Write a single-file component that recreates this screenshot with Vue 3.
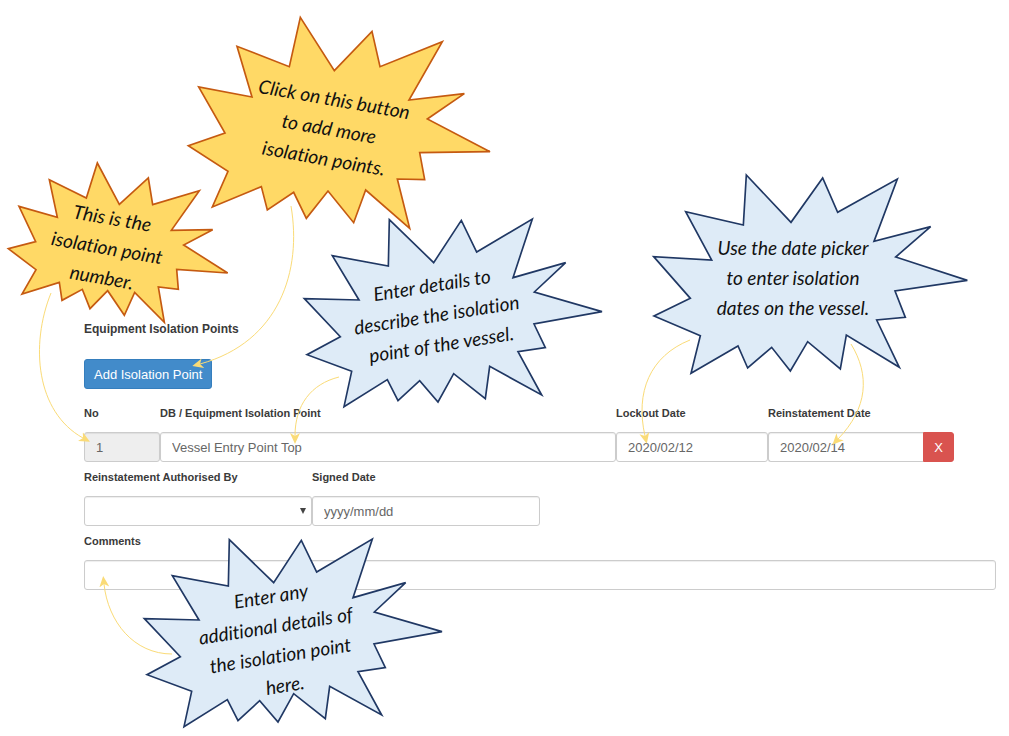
<script setup>
import { ref } from 'vue'

const number = ref('1')
const point = ref('Vessel Entry Point Top')
const lockout = ref('2020/02/12')
const reinstatement = ref('2020/02/14')
const authorisedBy = ref('')
const signed = ref('')
const comments = ref('')

const wideBurst = '283,29 416,158 499,31 545,126 712,27 654,203 812,158 718,246 921,305 717,342 751,413 669,425 740,555 584,469 571,566 476,491 429,576 374,512 309,572 277,509 147,590 170,484 36,434 136,380 28,266 192,270 112,137 280,168'

const bursts = [
  {
    id: 'add', tone: 'gold', x: 180, y: 10,
    points: '361,22 463,182 576,64 600,170 787,95 687,270 853,251 742,327 930,425 719,428 734,509 652,507 689,655 557,540 521,638 444,543 379,625 341,547 262,600 244,530 97,591 144,484 25,407 135,369 56,231 216,261 171,109 328,170',
    cx: 333, cy: 106, angle: 10,
    lines: ['Click on this button', 'to add more', 'isolation points.']
  },
  {
    id: 'number', tone: 'gold', x: 0, y: 155,
    points: '292,24 358,148 445,69 458,149 598,107 514,226 638,224 551,270 683,354 530,343 535,403 475,396 493,502 404,412 373,481 323,407 270,461 247,403 186,436 178,382 66,417 108,344 25,281 107,260 57,154 172,187 148,74 259,129',
    cx: 111, cy: 225, angle: 10,
    lines: ['This is the', 'isolation point', 'number.']
  },
  {
    id: 'details', tone: 'blue', x: 295, y: 210, points: wideBurst,
    cx: 433, cy: 292, angle: -9,
    lines: ['Enter details to', 'describe the isolation', 'point of the vessel.']
  },
  {
    id: 'dates', tone: 'blue', x: 645, y: 165,
    points: '304,30 438,172 533,39 578,142 757,42 687,229 857,185 752,276 967,346 750,378 781,457 695,465 763,607 604,510 586,612 488,530 436,618 380,547 308,609 279,543 138,625 166,512 27,453 136,400 26,275 200,285 122,140 295,180',
    cx: 793, cy: 255, angle: 0,
    lines: ['Use the date picker', 'to enter isolation', 'dates on the vessel.']
  },
  {
    id: 'comments', tone: 'blue', x: 135, y: 530, points: wideBurst,
    cx: 272, cy: 603, angle: -9,
    lines: ['Enter any', 'additional details of', 'the isolation point', 'here.']
  }
]

const arrows = [
  'M291 206 C302 270 280 342 200 364',
  'M51 293 C30 345 36 412 83 438',
  'M339 377 C311 384 295 405 295 436',
  'M690 340 C650 356 635 392 645 436',
  'M851 344 C870 375 868 408 838 439',
  'M172 654 C134 654 108 622 104 584'
]
</script>

<template>
  <main class="page">
    <form class="form" @submit.prevent>
      <h1 class="title">Equipment Isolation Points</h1>
      <button type="button" class="add">Add Isolation Point</button>

      <div class="row">
        <div class="field span-1">
          <label for="no">No</label>
          <input id="no" v-model="number" class="control muted" readonly />
        </div>
        <div class="field span-6">
          <label for="point">DB / Equipment Isolation Point</label>
          <input id="point" v-model="point" class="control" />
        </div>
        <div class="field span-2">
          <label for="lockout">Lockout Date</label>
          <input id="lockout" v-model="lockout" class="control" />
        </div>
        <div class="field span-3">
          <label for="reinstatement">Reinstatement Date</label>
          <div class="group">
            <input id="reinstatement" v-model="reinstatement" class="control" />
            <button type="button" class="remove" aria-label="Remove isolation point">X</button>
          </div>
        </div>
      </div>

      <div class="row">
        <div class="field span-3">
          <label for="authorised">Reinstatement Authorised By</label>
          <div class="picker">
            <select id="authorised" v-model="authorisedBy" class="control">
              <option value=""></option>
            </select>
            <svg class="caret" viewBox="0 0 6 6" aria-hidden="true"><path d="M0 0H6L3 6Z" /></svg>
          </div>
        </div>
        <div class="field span-3">
          <label for="signed">Signed Date</label>
          <input id="signed" v-model="signed" class="control" placeholder="yyyy/mm/dd" />
        </div>
      </div>

      <div class="row">
        <div class="field span-12">
          <label for="comments">Comments</label>
          <input id="comments" v-model="comments" class="control" />
        </div>
      </div>
    </form>

    <svg class="notes" width="1009" height="736" viewBox="0 0 1009 736">
      <defs>
        <marker id="head" markerUnits="userSpaceOnUse" markerWidth="12" markerHeight="12" refX="3" refY="6" orient="auto">
          <path d="M0 1L11 6L0 11L3 6Z" fill="#fadb77" />
        </marker>
      </defs>
      <g v-for="b in bursts" :key="b.id" :class="b.tone">
        <svg :x="b.x" :y="b.y" width="340" height="230" viewBox="0 0 1020 690">
          <polygon class="burst" :points="b.points" />
        </svg>
        <g :transform="`translate(${b.cx} ${b.cy}) rotate(${b.angle})`">
          <text v-for="(line, i) in b.lines" :key="line" class="script" x="0" :y="i * 30">{{ line }}</text>
        </g>
      </g>
      <path v-for="a in arrows" :key="a" class="arrow" :d="a" marker-end="url(#head)" />
    </svg>
  </main>
</template>

<style>
body {
  margin: 0;
  background: #fff;
}
</style>

<style scoped>
.page {
  position: relative;
  box-sizing: border-box;
  min-height: 100vh;
  padding: 320px 13px 0 84px;
  font-family: "Liberation Sans", Arial, sans-serif;
  color: #3a3a3a;
}
.form {
  display: flex;
  flex-direction: column;
  align-items: stretch;
  gap: 6px;
}
.title {
  margin: 0 0 15px;
  font-size: 12px;
  line-height: 18px;
  font-weight: bold;
}
.add {
  align-self: flex-start;
  height: 30px;
  margin-bottom: 9px;
  padding: 0 9px;
  border: 1px solid #357ebd;
  border-radius: 3px;
  background: #428bca;
  color: #fff;
  font: 13px "Liberation Sans", Arial, sans-serif;
}
.row {
  display: grid;
  grid-template-columns: repeat(12, 1fr);
}
.field {
  display: flex;
  flex-direction: column;
  gap: 10px;
  min-width: 0;
}
.span-1 { grid-column: span 1; }
.span-2 { grid-column: span 2; }
.span-3 { grid-column: span 3; }
.span-6 { grid-column: span 6; }
.span-12 { grid-column: span 12; }
label {
  font-size: 11px;
  line-height: 18px;
  font-weight: bold;
  white-space: nowrap;
}
.control {
  box-sizing: border-box;
  width: 100%;
  height: 30px;
  padding: 0 11px;
  border: 1px solid #ccc;
  border-radius: 3px;
  background: #fff;
  box-shadow: inset 0 1px 1px rgba(0, 0, 0, 0.07);
  color: #666;
  font: 13px "Liberation Sans", Arial, sans-serif;
}
.control::placeholder {
  color: #666;
  opacity: 1;
}
.muted {
  background: #eee;
}
.group {
  display: flex;
  width: 186px;
}
.group .control {
  flex: 1;
  min-width: 0;
  border-right: 0;
  border-radius: 3px 0 0 3px;
}
.remove {
  width: 31px;
  height: 30px;
  padding: 0;
  border: 1px solid #d9534f;
  border-radius: 0 3px 3px 0;
  background: #d9534f;
  color: #fff;
  font: 13px "Liberation Sans", Arial, sans-serif;
}
.picker {
  position: relative;
}
.picker .control {
  display: block;
  appearance: none;
}
.caret {
  position: absolute;
  right: 6px;
  top: 12px;
  width: 6px;
  height: 6px;
  fill: #444;
  pointer-events: none;
}
.notes {
  position: absolute;
  left: 0;
  top: 0;
  pointer-events: none;
}
.burst {
  stroke-width: 5;
}
.gold .burst {
  fill: #ffd966;
  stroke: #c55a11;
}
.blue .burst {
  fill: #deebf7;
  stroke: #203864;
}
.script {
  font: italic 19px Lato, sans-serif;
  font-variant-ligatures: none;
  text-anchor: middle;
  fill: #111;
}
.arrow {
  fill: none;
  stroke: #fadb77;
  stroke-width: 1;
}
</style>
